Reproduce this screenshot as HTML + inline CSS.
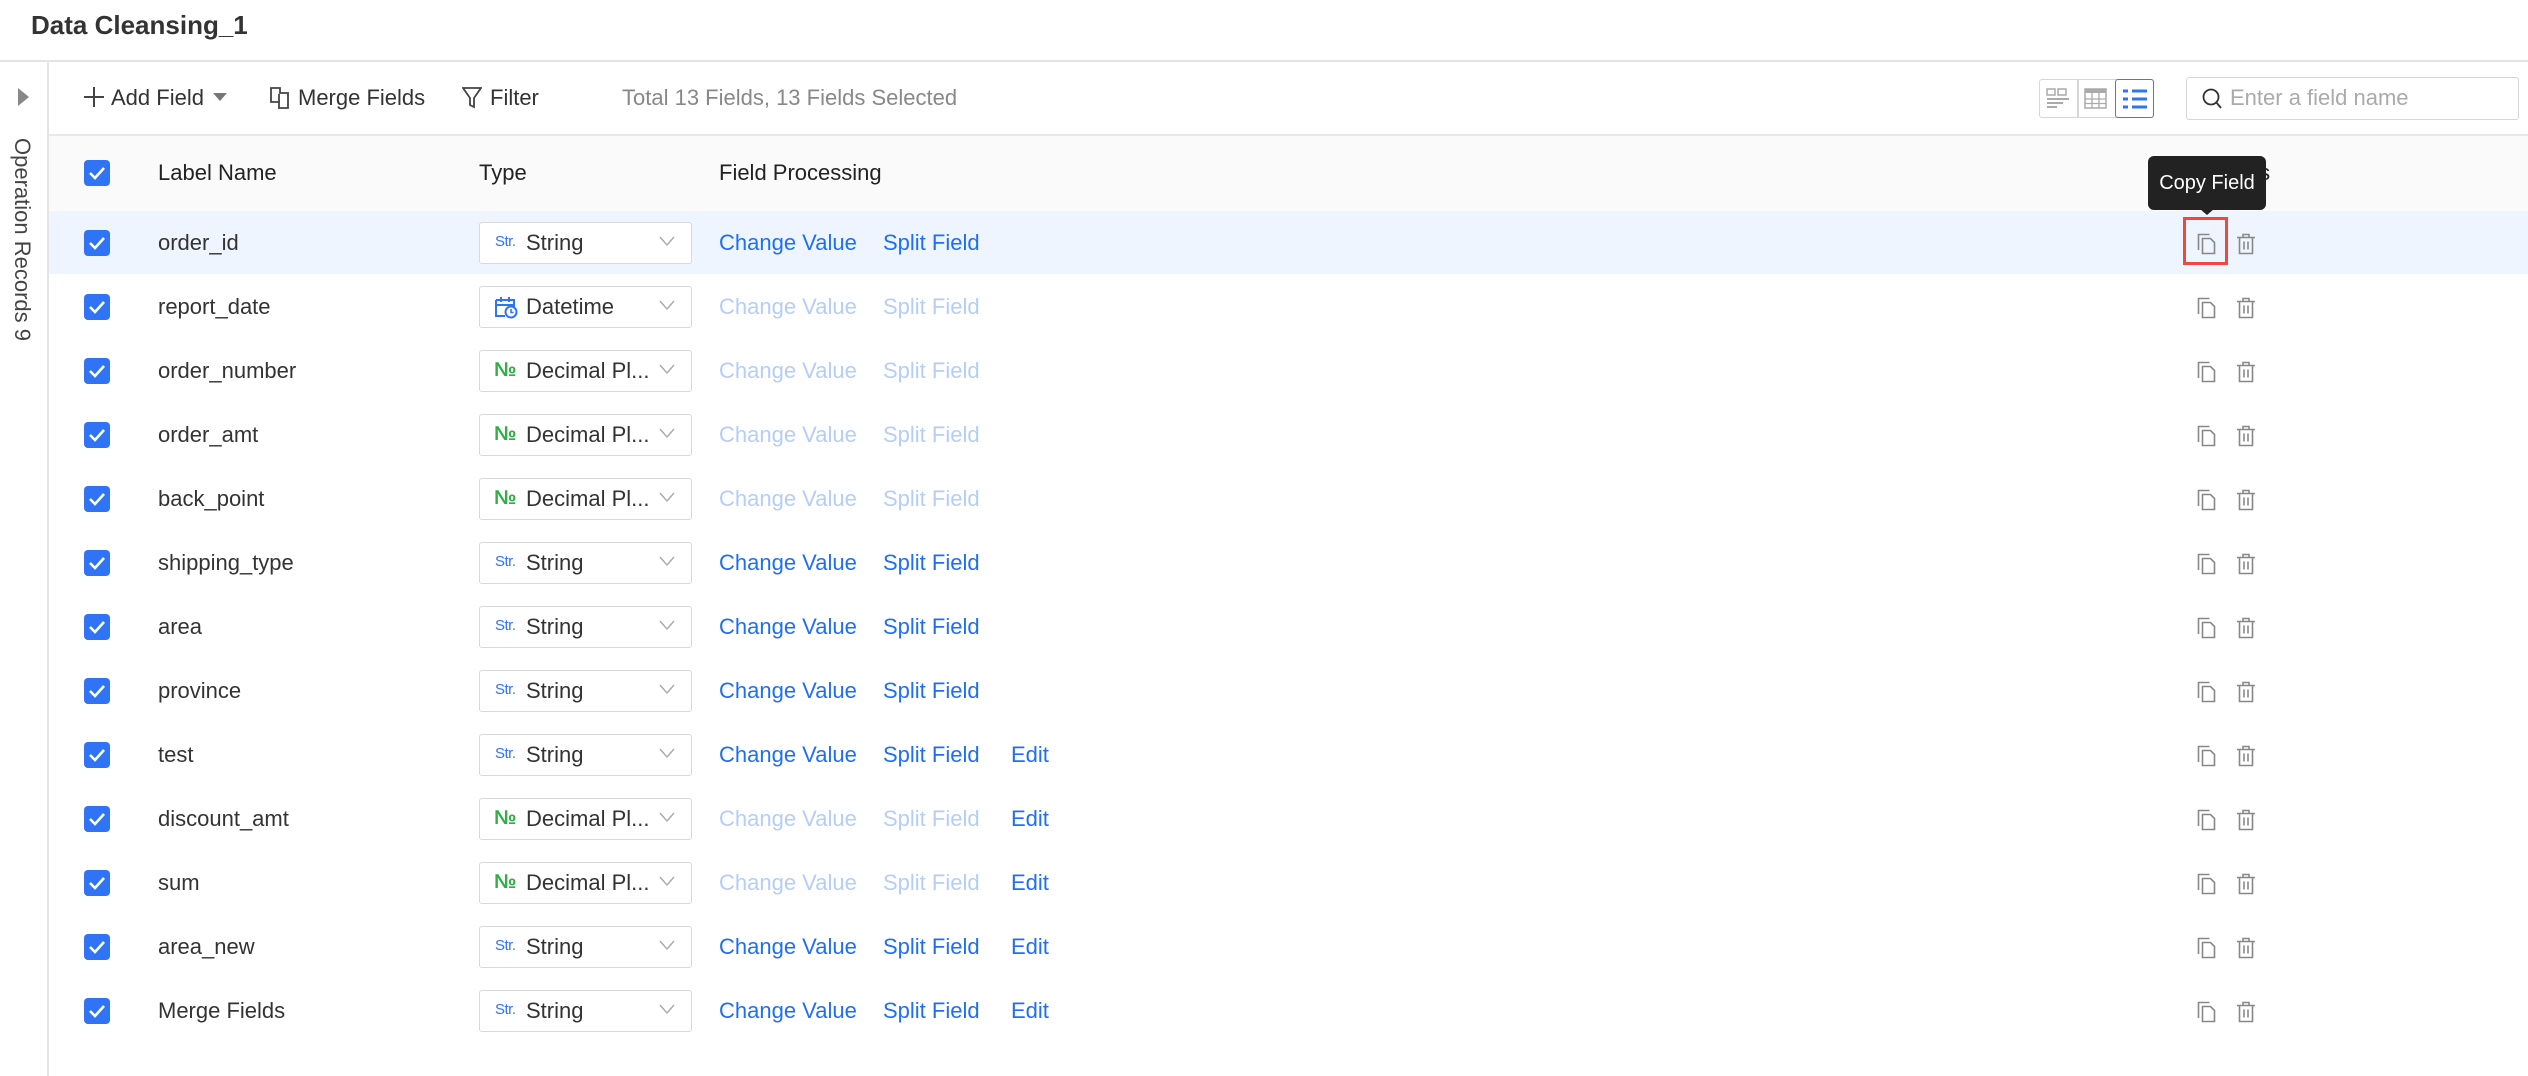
<!DOCTYPE html>
<html><head><meta charset="utf-8"><style>
*{box-sizing:border-box;margin:0;padding:0}
body{width:2528px;height:1076px;background:#fff;font-family:"Liberation Sans",Arial,sans-serif;color:#333;position:relative;overflow:hidden;font-size:22px}
.abs{position:absolute}
.title{left:31px;top:8px;font-size:26px;font-weight:bold;color:#333;line-height:34px}
.hline{left:0;top:60px;width:2528px;height:2px;background:#e4e4e4}
.side{left:47px;top:61px;width:2px;height:1015px;background:#e4e4e4}
.tri{left:18px;top:88px;width:0;height:0;border-top:9px solid transparent;border-bottom:9px solid transparent;border-left:11px solid #888}
.vtext{left:35px;top:138px;transform-origin:0 0;transform:rotate(90deg);white-space:nowrap;font-size:22px;color:#444;line-height:26px}
.tb{top:84px;line-height:28px;font-size:22px;color:#333;white-space:nowrap}
.tbline{left:49px;top:134px;width:2479px;height:2px;background:#e8e8e8}
.thead{left:49px;top:136px;width:2479px;height:75px;background:#fafafa}
.th{top:158px;line-height:30px;font-size:22px;color:#222}
.r{position:absolute;left:0;width:2528px;height:64px}
.r>*{position:absolute}
.cb{width:26px;height:26px;border-radius:4px;background:#2f74f5;left:84px;top:19px}
.cb svg{position:absolute;left:4px;top:5px}
.lbl{left:158px;top:17px;line-height:30px;color:#333;white-space:nowrap}
.sel{left:479px;top:11px;width:213px;height:42px;border:1.5px solid #d9d9d9;border-radius:3px;background:#fff}
.sel .t{position:absolute;left:46px;top:6px;line-height:28px;color:#333;white-space:nowrap}
.sel .ar{position:absolute;right:16px;top:13px}
.sel .st{position:absolute;left:15px;top:9px;font-size:15px;color:#2f74f5;line-height:20px;letter-spacing:-0.5px}
.sel .no{position:absolute;left:14px;top:7px;font-size:20px;font-weight:bold;color:#2db043;line-height:24px}
.sel .cal{position:absolute;left:14px;top:8px}
.lk{top:17px;line-height:30px;color:#1f6ff0;white-space:nowrap}
.dis{color:#b5cdf9}
.c1{left:719px}.c2{left:883px}.c3{left:1011px}
.cp{left:2197px;top:22px}
.tr{left:2236px;top:22px}
</style></head><body>
<svg width="0" height="0" style="position:absolute"><defs>
<symbol id="chk" viewBox="0 0 18 16"><path d="M2 8l5 5 9-10" fill="none" stroke="#fff" stroke-width="2.6"/></symbol>
<symbol id="arr" viewBox="0 0 16 10"><path d="M1 1l7 8 7-8" fill="none" stroke="#aaa" stroke-width="1.4"/></symbol>
<symbol id="copy" viewBox="0 0 20 22"><path d="M1.5 17V1.5h11" fill="none" stroke="#888" stroke-width="1.6"/><path d="M5.5 5.5h8l4 4v11h-12z" fill="none" stroke="#888" stroke-width="1.6"/></symbol>
<symbol id="trash" viewBox="0 0 20 22"><path d="M1 4.5h18M7 4.5V1.5h6v3M3.5 4.5v16h13v-16M8 8.5v8M12 8.5v8" fill="none" stroke="#888" stroke-width="1.6"/></symbol>
<symbol id="cal" viewBox="0 0 24 24"><path d="M2 5h18v7M2 5v16h9M2 10h18M7 2v5M15 2v5" fill="none" stroke="#2f74f5" stroke-width="2"/><circle cx="17" cy="17" r="5.5" fill="#fff" stroke="#2f74f5" stroke-width="2"/><path d="M17 14v3.5h2.5" fill="none" stroke="#2f74f5" stroke-width="1.6"/></symbol>
</defs></svg>

<div class="abs title">Data Cleansing_1</div>
<div class="abs hline"></div>
<div class="abs side"></div>
<div class="abs tri"></div>
<div class="abs vtext">Operation Records 9</div>

<svg class="abs" style="left:83px;top:86px" width="22" height="22" viewBox="0 0 22 22"><path d="M11 1v20M1 11h20" stroke="#444" stroke-width="2"/></svg>
<div class="abs tb" style="left:111px">Add Field</div>
<div class="abs" style="left:213px;top:93px;border-left:7px solid transparent;border-right:7px solid transparent;border-top:8px solid #777"></div>
<svg class="abs" style="left:269px;top:86px" width="22" height="24" viewBox="0 0 22 24"><path d="M2 2h9v5h8v15h-9v-6H2z" fill="none" stroke="#444" stroke-width="1.8"/><path d="M10 8v8" stroke="#444" stroke-width="1.8"/></svg>
<div class="abs tb" style="left:298px">Merge Fields</div>
<svg class="abs" style="left:462px;top:86px" width="20" height="24" viewBox="0 0 20 24"><path d="M1 2h18l-7 10v9l-4-2v-7z" fill="none" stroke="#444" stroke-width="1.8"/></svg>
<div class="abs tb" style="left:490px">Filter</div>
<div class="abs tb" style="left:622px;color:#888">Total 13 Fields, 13 Fields Selected</div>

<div class="abs" style="left:2039px;top:79px;width:115px;height:39px;border:1.5px solid #d6d6d6;border-radius:3px"></div>
<div class="abs" style="left:2077px;top:80px;width:1.5px;height:37px;background:#d6d6d6"></div>
<div class="abs" style="left:2115px;top:79px;width:39px;height:39px;border:1.5px solid #3a7bf2;border-radius:3px"></div>
<svg class="abs" style="left:2046px;top:88px" width="24" height="22" viewBox="0 0 24 22"><rect x="1" y="1" width="8" height="6" fill="none" stroke="#aaa" stroke-width="1.5"/><rect x="12" y="1" width="8" height="6" fill="none" stroke="#aaa" stroke-width="1.5"/><path d="M1 11h22M1 15h16M1 19h10" stroke="#aaa" stroke-width="2"/></svg>
<svg class="abs" style="left:2084px;top:88px" width="24" height="22" viewBox="0 0 24 22"><rect x="1" y="1" width="21" height="19" fill="none" stroke="#aaa" stroke-width="1.5"/><path d="M1 3h21" stroke="#aaa" stroke-width="4"/><path d="M1 11h21M1 15.5h21M8 5v15M15 5v15" stroke="#aaa" stroke-width="1.3"/></svg>
<svg class="abs" style="left:2122px;top:88px" width="26" height="22" viewBox="0 0 26 22"><path d="M1 3h5M10 3h15M1 11h5M10 11h15M1 19h5M10 19h15" stroke="#2f74f5" stroke-width="3"/></svg>

<div class="abs" style="left:2186px;top:77px;width:333px;height:43px;border:1.5px solid #d6d6d6;border-radius:3px"></div>
<svg class="abs" style="left:2202px;top:88px" width="20" height="22" viewBox="0 0 20 22"><circle cx="9" cy="9" r="7.5" fill="none" stroke="#333" stroke-width="1.8"/><path d="M14 14l5 6" stroke="#333" stroke-width="1.8"/></svg>
<div class="abs tb" style="left:2230px;top:84px;color:#aaa">Enter a field name</div>

<div class="abs tbline"></div>
<div class="abs thead"></div>
<div class="abs cb" style="top:160px"><svg width="18" height="16"><use href="#chk"/></svg></div>
<div class="abs th" style="left:158px">Label Name</div>
<div class="abs th" style="left:479px">Type</div>
<div class="abs th" style="left:719px">Field Processing</div>
<div class="abs th" style="left:2198px">Actions</div>

<div class="abs" style="left:49px;top:211px;width:2479px;height:63px;background:#eef5fe"></div>

<div class="r" style="top:211px"><div class="cb"><svg width="18" height="16"><use href="#chk"/></svg></div><div class="lbl">order_id</div><div class="sel"><span class="st">Str.</span><span class="t">String</span><svg class="ar" width="16" height="10"><use href="#arr"/></svg></div><div class="lk c1">Change Value</div><div class="lk c2">Split Field</div><svg class="cp" width="20" height="22"><use href="#copy"/></svg><svg class="tr" width="20" height="22"><use href="#trash"/></svg></div>

<div class="r" style="top:275px"><div class="cb"><svg width="18" height="16"><use href="#chk"/></svg></div><div class="lbl">report_date</div><div class="sel"><svg class="cal" width="24" height="24"><use href="#cal"/></svg><span class="t">Datetime</span><svg class="ar" width="16" height="10"><use href="#arr"/></svg></div><div class="lk c1 dis">Change Value</div><div class="lk c2 dis">Split Field</div><svg class="cp" width="20" height="22"><use href="#copy"/></svg><svg class="tr" width="20" height="22"><use href="#trash"/></svg></div>

<div class="r" style="top:339px"><div class="cb"><svg width="18" height="16"><use href="#chk"/></svg></div><div class="lbl">order_number</div><div class="sel"><span class="no">№</span><span class="t">Decimal Pl...</span><svg class="ar" width="16" height="10"><use href="#arr"/></svg></div><div class="lk c1 dis">Change Value</div><div class="lk c2 dis">Split Field</div><svg class="cp" width="20" height="22"><use href="#copy"/></svg><svg class="tr" width="20" height="22"><use href="#trash"/></svg></div>

<div class="r" style="top:403px"><div class="cb"><svg width="18" height="16"><use href="#chk"/></svg></div><div class="lbl">order_amt</div><div class="sel"><span class="no">№</span><span class="t">Decimal Pl...</span><svg class="ar" width="16" height="10"><use href="#arr"/></svg></div><div class="lk c1 dis">Change Value</div><div class="lk c2 dis">Split Field</div><svg class="cp" width="20" height="22"><use href="#copy"/></svg><svg class="tr" width="20" height="22"><use href="#trash"/></svg></div>

<div class="r" style="top:467px"><div class="cb"><svg width="18" height="16"><use href="#chk"/></svg></div><div class="lbl">back_point</div><div class="sel"><span class="no">№</span><span class="t">Decimal Pl...</span><svg class="ar" width="16" height="10"><use href="#arr"/></svg></div><div class="lk c1 dis">Change Value</div><div class="lk c2 dis">Split Field</div><svg class="cp" width="20" height="22"><use href="#copy"/></svg><svg class="tr" width="20" height="22"><use href="#trash"/></svg></div>

<div class="r" style="top:531px"><div class="cb"><svg width="18" height="16"><use href="#chk"/></svg></div><div class="lbl">shipping_type</div><div class="sel"><span class="st">Str.</span><span class="t">String</span><svg class="ar" width="16" height="10"><use href="#arr"/></svg></div><div class="lk c1">Change Value</div><div class="lk c2">Split Field</div><svg class="cp" width="20" height="22"><use href="#copy"/></svg><svg class="tr" width="20" height="22"><use href="#trash"/></svg></div>

<div class="r" style="top:595px"><div class="cb"><svg width="18" height="16"><use href="#chk"/></svg></div><div class="lbl">area</div><div class="sel"><span class="st">Str.</span><span class="t">String</span><svg class="ar" width="16" height="10"><use href="#arr"/></svg></div><div class="lk c1">Change Value</div><div class="lk c2">Split Field</div><svg class="cp" width="20" height="22"><use href="#copy"/></svg><svg class="tr" width="20" height="22"><use href="#trash"/></svg></div>

<div class="r" style="top:659px"><div class="cb"><svg width="18" height="16"><use href="#chk"/></svg></div><div class="lbl">province</div><div class="sel"><span class="st">Str.</span><span class="t">String</span><svg class="ar" width="16" height="10"><use href="#arr"/></svg></div><div class="lk c1">Change Value</div><div class="lk c2">Split Field</div><svg class="cp" width="20" height="22"><use href="#copy"/></svg><svg class="tr" width="20" height="22"><use href="#trash"/></svg></div>

<div class="r" style="top:723px"><div class="cb"><svg width="18" height="16"><use href="#chk"/></svg></div><div class="lbl">test</div><div class="sel"><span class="st">Str.</span><span class="t">String</span><svg class="ar" width="16" height="10"><use href="#arr"/></svg></div><div class="lk c1">Change Value</div><div class="lk c2">Split Field</div><div class="lk c3">Edit</div><svg class="cp" width="20" height="22"><use href="#copy"/></svg><svg class="tr" width="20" height="22"><use href="#trash"/></svg></div>

<div class="r" style="top:787px"><div class="cb"><svg width="18" height="16"><use href="#chk"/></svg></div><div class="lbl">discount_amt</div><div class="sel"><span class="no">№</span><span class="t">Decimal Pl...</span><svg class="ar" width="16" height="10"><use href="#arr"/></svg></div><div class="lk c1 dis">Change Value</div><div class="lk c2 dis">Split Field</div><div class="lk c3">Edit</div><svg class="cp" width="20" height="22"><use href="#copy"/></svg><svg class="tr" width="20" height="22"><use href="#trash"/></svg></div>

<div class="r" style="top:851px"><div class="cb"><svg width="18" height="16"><use href="#chk"/></svg></div><div class="lbl">sum</div><div class="sel"><span class="no">№</span><span class="t">Decimal Pl...</span><svg class="ar" width="16" height="10"><use href="#arr"/></svg></div><div class="lk c1 dis">Change Value</div><div class="lk c2 dis">Split Field</div><div class="lk c3">Edit</div><svg class="cp" width="20" height="22"><use href="#copy"/></svg><svg class="tr" width="20" height="22"><use href="#trash"/></svg></div>

<div class="r" style="top:915px"><div class="cb"><svg width="18" height="16"><use href="#chk"/></svg></div><div class="lbl">area_new</div><div class="sel"><span class="st">Str.</span><span class="t">String</span><svg class="ar" width="16" height="10"><use href="#arr"/></svg></div><div class="lk c1">Change Value</div><div class="lk c2">Split Field</div><div class="lk c3">Edit</div><svg class="cp" width="20" height="22"><use href="#copy"/></svg><svg class="tr" width="20" height="22"><use href="#trash"/></svg></div>

<div class="r" style="top:979px"><div class="cb"><svg width="18" height="16"><use href="#chk"/></svg></div><div class="lbl">Merge Fields</div><div class="sel"><span class="st">Str.</span><span class="t">String</span><svg class="ar" width="16" height="10"><use href="#arr"/></svg></div><div class="lk c1">Change Value</div><div class="lk c2">Split Field</div><div class="lk c3">Edit</div><svg class="cp" width="20" height="22"><use href="#copy"/></svg><svg class="tr" width="20" height="22"><use href="#trash"/></svg></div>

<div class="abs" style="left:2148px;top:156px;width:118px;height:54px;background:#222;border-radius:6px;color:#fff;font-size:20px;line-height:54px;text-align:center;white-space:nowrap">Copy Field</div>
<div class="abs" style="left:2200px;top:209px;border-left:7px solid transparent;border-right:7px solid transparent;border-top:6px solid #222"></div>
<div class="abs" style="left:2183px;top:217px;width:45px;height:48px;border:3px solid #f0483e"></div>
</body></html>
